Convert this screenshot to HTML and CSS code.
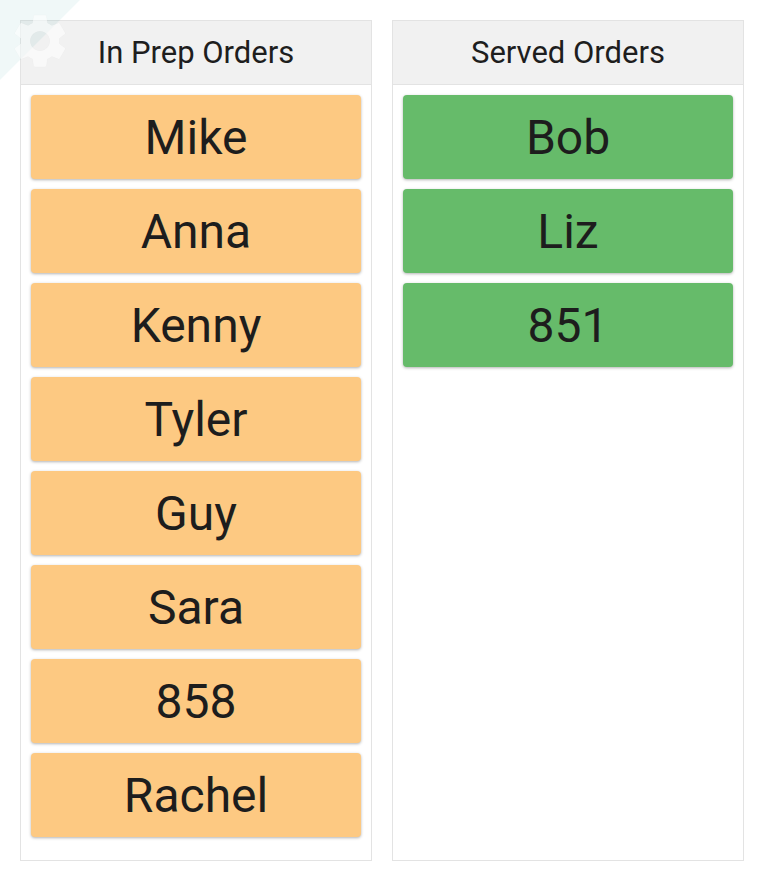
FILE: index.html
```html
<!DOCTYPE html>
<html>
<head>
<meta charset="utf-8">
<link rel="stylesheet" href="styles.css">
</head>
<body>
<div class="board">
  <section class="column">
    <header class="column-head">In Prep Orders</header>
    <div class="column-body">
      <div class="order prep">Mike</div>
      <div class="order prep">Anna</div>
      <div class="order prep">Kenny</div>
      <div class="order prep">Tyler</div>
      <div class="order prep">Guy</div>
      <div class="order prep">Sara</div>
      <div class="order prep">858</div>
      <div class="order prep">Rachel</div>
    </div>
  </section>
  <section class="column">
    <header class="column-head">Served Orders</header>
    <div class="column-body">
      <div class="order served">Bob</div>
      <div class="order served">Liz</div>
      <div class="order served">851</div>
    </div>
  </section>
</div>
<svg class="corner-mark" width="100" height="100" viewBox="0 0 100 100">
  <polygon points="0,0 80,0 0,80" fill="rgba(0,128,128,0.06)"/>
  <g transform="translate(7.6,8.6) scale(2.7)">
    <path fill-rule="evenodd" fill="rgba(255,255,255,0.55)" stroke="rgba(0,0,0,0.02)" stroke-width="0.3" d="M19.14 12.94c.04-.3.06-.61.06-.94 0-.32-.02-.64-.07-.94l2.03-1.58c.18-.14.23-.41.12-.61l-1.92-3.32c-.12-.22-.37-.29-.59-.22l-2.39.96c-.5-.38-1.030-.7-1.62-.94l-.36-2.54c-.04-.24-.24-.41-.48-.41h-3.84c-.24 0-.43.17-.47.41l-.36 2.54c-.59.24-1.13.57-1.62.94l-2.39-.96c-.22-.08-.47 0-.59.22L2.74 8.87c-.12.21-.08.47.12.61l2.03 1.58c-.05.3-.09.63-.09.94s.02.64.07.94l-2.03 1.580c-.18.14-.23.41-.12.61l1.92 3.32c.12.22.37.29.59.22l2.39-.96c.5.38 1.03.7 1.62.94l.36 2.54c.05.24.24.41.48.41h3.84c.24 0 .44-.17.47-.41l.36-2.54c.59-.24 1.13-.56 1.62-.94l2.39.96c.22.08.47 0 .59-.22l1.92-3.32c.12-.22.07-.47-.12-.61l-2.01-1.58zM12 15.6c-1.98 0-3.6-1.62-3.6-3.6s1.62-3.6 3.6-3.6 3.6 1.62 3.6 3.6-1.62 3.6-3.6 3.6z"/>
  </g>
</svg>
</body>
</html>
```
FILE: styles.css
```css
html, body {
  margin: 0;
  padding: 0;
  background: #ffffff;
}
body {
  font-family: Roboto, "Liberation Sans", sans-serif;
  color: #222222;
}
.board {
  display: flex;
  gap: 20px;
  padding: 20px;
  align-items: stretch;
}
.column {
  flex: 0 0 352px;
  width: 352px;
  box-sizing: border-box;
  border: 1px solid #e3e3e3;
  display: flex;
  flex-direction: column;
}
.column-head {
  height: 64px;
  box-sizing: border-box;
  background: #f1f1f1;
  border-bottom: 1px solid #e3e3e3;
  display: flex;
  align-items: center;
  justify-content: center;
  font-size: 31px;
  color: #1e1e1e;
}
.column-body {
  flex: 1;
  display: flex;
  flex-direction: column;
  gap: 10px;
  padding: 10px 10px 23px;
}
.order {
  height: 84px;
  border-radius: 4px;
  display: flex;
  align-items: center;
  justify-content: center;
  font-size: 48px;
  color: #1d1d1d;
  box-shadow: 0 1px 3px rgba(0, 0, 0, 0.3);
}
.prep {
  background: #fdc982;
}
.served {
  background: #66bb6a;
}
.corner-mark {
  position: absolute;
  left: 0;
  top: 0;
  pointer-events: none;
}
```
